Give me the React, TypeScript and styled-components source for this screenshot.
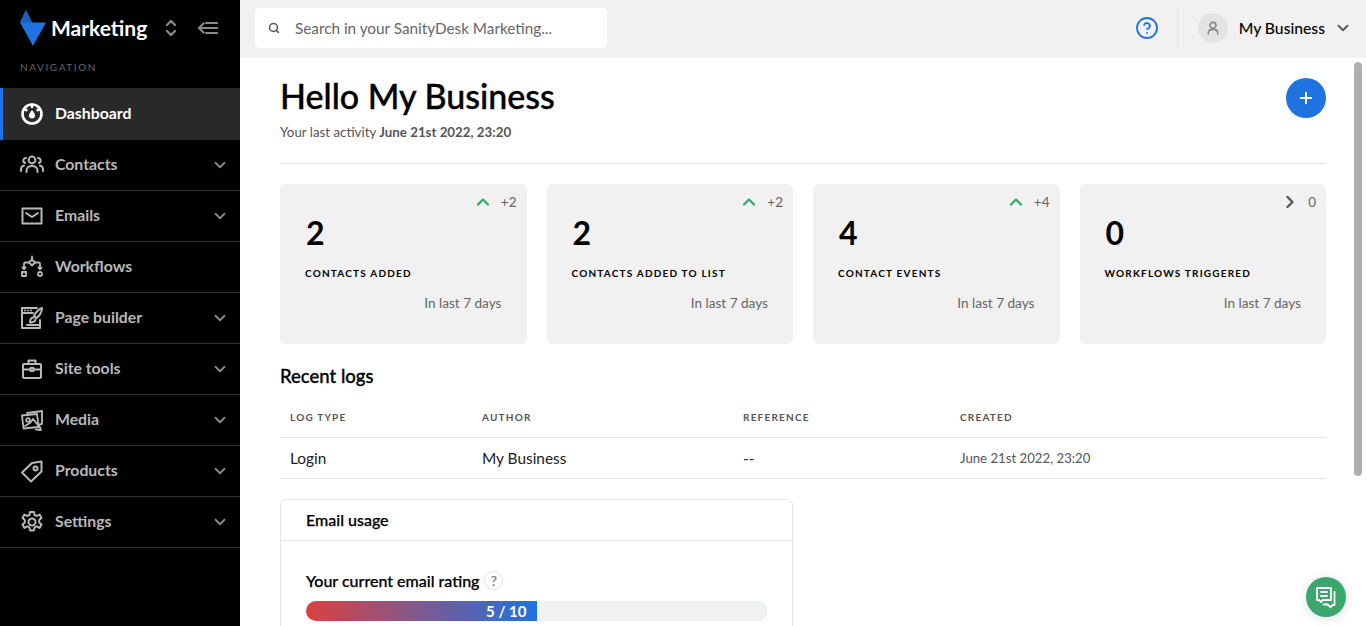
import React from "react";
import styled, { createGlobalStyle } from "styled-components";
import { ChevronDown, ChevronUp, ChevronRight, Search, Plus, CircleHelp } from "lucide-react";

const Font = `"Lato", "Noto Sans", "Liberation Sans", sans-serif`;

const Global = createGlobalStyle`
  html, body { margin: 0; padding: 0; height: 100%; overflow: hidden; background: #fff; }
  * { box-sizing: border-box; }
  body { font-family: ${Font}; color: #000; }
`;

const Shell = styled.div`
  display: flex;
  width: 100vw;
  height: 100vh;
  overflow: hidden;
  position: relative;
`;

const Sidebar = styled.aside`
  width: 240px;
  flex: none;
  background: #000;
  display: flex;
  flex-direction: column;
`;

const Brand = styled.div`
  height: 55px;
  display: flex;
  align-items: center;
  padding-left: 20px;
`;

const BrandName = styled.span`
  color: #fff;
  font-size: 21px;
  font-weight: 700;
  margin-left: 5px;
  width: 114px;
`;

const BrandIcon = styled.span`
  color: #8a8a8a;
  display: flex;
  margin-right: 21px;
`;

const NavTitle = styled.div`
  height: 33px;
  padding: 5px 0 0 20px;
  color: #666;
  font-size: 10px;
  letter-spacing: 1.6px;
  line-height: 14px;
`;

const NavRow = styled.div<{ $active?: boolean }>`
  height: ${(p) => (p.$active ? "52px" : "51px")};
  display: flex;
  align-items: center;
  padding-left: ${(p) => (p.$active ? "17px" : "20px")};
  padding-right: 11px;
  background: ${(p) => (p.$active ? "#292929" : "transparent")};
  border-left: ${(p) => (p.$active ? "3px solid #1f73e0" : "none")};
  border-bottom: ${(p) => (p.$active ? "none" : "1px solid #333")};
  color: ${(p) => (p.$active ? "#fff" : "#b8b8b8")};
`;

const NavIcon = styled.span`
  width: 35px;
  flex: none;
  display: flex;
`;

const NavLabel = styled.span`
  flex: 1;
  font-size: 15.8px;
  font-weight: 700;
  padding-bottom: 4px;
`;

const Main = styled.div`
  flex: 1;
  min-width: 0;
  display: flex;
  flex-direction: column;
`;

const Topbar = styled.header`
  height: 58px;
  flex: none;
  background: #f1f1f1;
  display: flex;
  align-items: center;
  padding: 0 14px 2px 15px;
`;

const SearchBox = styled.div`
  width: 352px;
  height: 40px;
  background: #fff;
  border-radius: 5px;
  display: flex;
  align-items: center;
  padding-left: 13px;
  gap: 15px;
  color: #666;
  font-size: 15.3px;
`;

const TopRight = styled.div`
  margin-left: auto;
  display: flex;
  align-items: center;
`;

const HelpBtn = styled.span`
  color: #1f73e0;
  display: flex;
  margin-right: 18px;
`;

const VSep = styled.span`
  width: 1px;
  height: 40px;
  background: #e4e4e4;
  margin-right: 20px;
`;

const Avatar = styled.span`
  width: 30px;
  height: 30px;
  border-radius: 50%;
  background: #e3e3e3;
  color: #8a8a8a;
  display: flex;
  align-items: center;
  justify-content: center;
  margin-right: 11px;
`;

const UserName = styled.span`
  font-size: 15.7px;
  font-weight: 500;
  margin-right: 9px;
`;

const Content = styled.main`
  flex: 1;
  min-height: 0;
  overflow: hidden;
  padding: 20px 40px 0;
`;

const Head = styled.div`
  display: flex;
  justify-content: space-between;
  align-items: flex-start;
  height: 86px;
  border-bottom: 1px solid #e4e4e4;
`;

const Title = styled.h1`
  margin: -1px 0 0;
  font-size: 34px;
  line-height: 38px;
  font-weight: 500;
  -webkit-text-stroke: 0.4px #000;
`;

const Sub = styled.p`
  margin: 8px 0 0;
  font-size: 13.3px;
  line-height: 18px;
  color: #555;
  & b { font-weight: 700; }
`;

const AddBtn = styled.span`
  width: 40px;
  height: 40px;
  border-radius: 50%;
  background: #1f73e0;
  color: #fff;
  display: flex;
  align-items: center;
  justify-content: center;
`;

const Stats = styled.div`
  display: grid;
  grid-template-columns: repeat(4, 1fr);
  gap: 20px;
  margin-top: 20px;
`;

const Stat = styled.div`
  height: 160px;
  background: #f1f1f1;
  border-radius: 6px;
  padding: 10px 10px 0 25px;
  display: flex;
  flex-direction: column;
`;

const Trend = styled.div<{ $up: boolean }>`
  display: flex;
  justify-content: flex-end;
  align-items: center;
  height: 16px;
  font-size: 13.5px;
  color: #666;
  gap: 8px;
  & svg { color: ${(p) => (p.$up ? "#3aa76d" : "#555")}; }
`;

const StatValue = styled.div`
  font-size: 32px;
  line-height: 38px;
  font-weight: 700;
  margin-top: 4px;
  padding-left: 1px;
`;

const StatLabel = styled.div`
  font-size: 10px;
  line-height: 14px;
  font-weight: 700;
  letter-spacing: 1.2px;
  margin-top: 14px;
`;

const StatNote = styled.div`
  font-size: 13.6px;
  line-height: 18px;
  color: #666;
  text-align: right;
  padding-right: 15px;
  margin-top: 14px;
`;

const SectionTitle = styled.h2`
  margin: 22px 0 0;
  font-size: 18.5px;
  line-height: 20px;
  font-weight: 500;
  -webkit-text-stroke: 0.3px #000;
`;

const LogTable = styled.div`
  margin-top: 11px;
`;

const LogRow = styled.div<{ $head?: boolean }>`
  display: grid;
  grid-template-columns: 192px 261px 217px 1fr;
  align-items: center;
  height: 41px;
  padding-left: 10px;
  border-bottom: 1px solid #e4e4e4;
  font-size: ${(p) => (p.$head ? "10px" : "15.4px")};
  letter-spacing: ${(p) => (p.$head ? "1.2px" : "0")};
  color: ${(p) => (p.$head ? "#555" : "#222")};
  font-weight: ${(p) => (p.$head ? 700 : 400)};
`;

const LogDate = styled.span`
  font-size: 13.2px;
  color: #555;
`;

const Usage = styled.section`
  width: 513px;
  margin-top: 20px;
  border: 1px solid #e4e4e4;
  border-radius: 6px;
`;

const UsageHead = styled.div`
  height: 41px;
  display: flex;
  align-items: center;
  padding: 0 0 2px 25px;
  border-bottom: 1px solid #e4e4e4;
  font-size: 16px;
  font-weight: 500;
  -webkit-text-stroke: 0.25px #000;
`;

const UsageBody = styled.div`
  padding: 30px 25px 30px;
`;

const RatingLabel = styled.div`
  display: flex;
  align-items: center;
  gap: 5px;
  font-size: 16px;
  font-weight: 500;
  height: 20px;
  padding-bottom: 2px;
  -webkit-text-stroke: 0.25px #000;
`;

const Hint = styled.span`
  width: 19px;
  height: 19px;
  border-radius: 50%;
  border: 1px solid #e4e4e4;
  color: #777;
  font-size: 14px;
  display: flex;
  align-items: center;
  justify-content: center;
  -webkit-text-stroke: 0;
`;

const Track = styled.div`
  margin-top: 10px;
  height: 20px;
  border-radius: 10px;
  background: #f1f1f1;
  overflow: hidden;
  box-shadow: inset -1px 0 0 #dcefe4;
`;

const Fill = styled.div`
  height: 100%;
  background: linear-gradient(90deg, #dc4040, #1f73e0);
  color: #fff;
  font-size: 15px;
  line-height: 20px;
  font-weight: 700;
  text-align: right;
  padding-right: 10px;
`;

const ScrollThumb = styled.div`
  position: absolute;
  left: 1354px;
  top: 62px;
  width: 8px;
  height: 414px;
  background: #b0b0b0;
  border-radius: 4px;
`;

const ChatBtn = styled.span`
  position: absolute;
  left: 1306px;
  top: 577px;
  width: 40px;
  height: 40px;
  border-radius: 50%;
  background: #3aa76d;
  color: #fff;
  display: flex;
  align-items: center;
  justify-content: center;
  box-shadow: 0 2px 12px rgba(0, 0, 0, 0.12);
`;

const Ico = ({ children, size = 24, sw = 1.8 }: { children: React.ReactNode; size?: number; sw?: number }) => (
  <svg width={size} height={size} viewBox="0 0 24 24" fill="none" stroke="currentColor" strokeWidth={sw} strokeLinecap="round" strokeLinejoin="round">
    {children}
  </svg>
);

const Logo = () => (
  <svg width="26" height="36" viewBox="0 0 26 36">
    <polygon points="6,0 0,12.5 13,36 26,12.5 12,12.5" fill="#1f73e0" />
    <polygon points="6,0 0,12.5 12,12.5" fill="#1a5fb8" />
  </svg>
);

const SwitchIcon = () => (
  <svg width="12" height="18" viewBox="0 0 12 18" fill="none" stroke="currentColor" strokeWidth="2.2" strokeLinecap="round" strokeLinejoin="round">
    <path d="M2 6l4-4 4 4" />
    <path d="M2 12l4 4 4-4" />
  </svg>
);

const CollapseIcon = () => (
  <svg width="20" height="14" viewBox="0 0 20 14" fill="none" stroke="currentColor" strokeWidth="2.2" strokeLinecap="round" strokeLinejoin="round">
    <path d="M5.500 2.500L1 7l4.500 4.500" />
    <path d="M8 2h11M3 7h16M8 12h11" />
  </svg>
);

const DashIcon = () => (
  <Ico sw={2.6}>
    <circle cx="12" cy="12" r="9.500" />
    <path d="M12 8c-2 2.600-3 3.800-3 5.400a3 3 0 0 0 6 0c0-1.600-1-2.800-3-5.400z" fill="currentColor" stroke="none" />
    <path d="M12 2.500v2.500M4.500 7l2 1.200M19.500 7l-2 1.200" />
  </Ico>
);
const ContactsIcon = () => (
  <Ico sw={2}>
    <circle cx="12" cy="7" r="3.400" />
    <path d="M6.500 19v-1.500c0-2.600 2.400-4.500 5.500-4.500s5.500 1.900 5.500 4.500V19" />
    <path d="M6 5a2.600 2.600 0 0 0-1 5M1 18v-1.500c0-2 1-3.400 3-4" />
    <path d="M18 5a2.600 2.600 0 0 1 1 5M23 18v-1.500c0-2-1-3.400-3-4" />
  </Ico>
);
const MailIcon = () => (
  <Ico sw={2}>
    <rect x="2.500" y="4.500" width="19" height="15" />
    <path d="M6 9l6 4 6-4" />
  </Ico>
);
const FlowIcon = () => (
  <Ico sw={1.8}>
    <path d="M12 1.500v3" />
    <path d="M12 4.500l3 3-3 3-3-3z" />
    <path d="M9 7.500H5.500A1.500 1.500 0 0 0 4 9v5M15 7.500h3.500A1.500 1.500 0 0 1 20 9v5" />
    <path d="M2.500 12.500L4 14l1.500-1.500M18.500 12.500L20 14l1.500-1.500" />
    <rect x="2" y="17" width="4" height="4" />
    <circle cx="20" cy="19" r="2" />
  </Ico>
);
const PageIcon = () => (
  <Ico sw={2}>
    <path d="M20 14v8H2V2h15" />
    <path d="M2 7h11" />
    <path d="M5 4.500h.01M8 4.500h.01M11 4.500h.01" />
    <path d="M22 2c-3 1-7 5-8 8l2 2c3-1 6-6 6-10z" />
    <path d="M13.500 11.500c-2 0-3.500 1.500-3.500 5 2 0 5-1 5.500-3" />
    <path d="M7 19h13" />
  </Ico>
);
const ToolsIcon = () => (
  <Ico sw={2}>
    <rect x="3" y="7" width="18" height="14" rx="1" />
    <path d="M8.500 7V3.500h7V7M3 12.500h18" />
    <rect x="10.500" y="11" width="3" height="3" fill="#000" />
  </Ico>
);
const MediaIcon = () => (
  <Ico sw={1.8}>
    <path d="M7 5l15-2 0 13-3 .5" />
    <path d="M2 7.500l15-1.500 1.500 13-15 1.500z" />
    <circle cx="8" cy="12" r="1.800" />
    <path d="M5 18l5-3 3-4 5 6" />
    <path d="M19 17l2 5-5-.5" />
  </Ico>
);
const TagIcon = () => (
  <Ico sw={2}>
    <path d="M21.500 2.500v10L11 22.500l-9-9L12 4z" />
    <circle cx="15.500" cy="9.500" r="2" />
  </Ico>
);
const GearIcon = () => (
  <Ico sw={2}>
    <circle cx="12" cy="12" r="3.500" />
    <path d="M10 2h4l.6 3 2.200 1 2.700-1.500 2 3.500-2.300 2v2.400l2.300 2-2 3.500-2.700-1.500-2.200 1-.6 3h-4l-.6-3-2.200-1-2.700 1.500-2-3.500 2.300-2v-2.400l-2.300-2 2-3.500 2.700 1.500 2.200-1z" />
  </Ico>
);
const UserIcon = () => (
  <Ico size={16} sw={2.4}>
    <circle cx="12" cy="8" r="4.500" />
    <path d="M5 21v-2c0-3 2-5 7-5s7 2 7 5v2" />
  </Ico>
);
const ChatIcon = () => (
  <Ico size={24} sw={1.8}>
    <path d="M3 3h14v12H9l-2 2-2-2H3z" />
    <path d="M7 7h6M7 11h6" />
    <path d="M20.500 7v13h-2l-2 2-3-2.500h-4" />
  </Ico>
);

const nav = [
  { label: "Contacts", icon: <ContactsIcon />, more: true },
  { label: "Emails", icon: <MailIcon />, more: true },
  { label: "Workflows", icon: <FlowIcon />, more: false },
  { label: "Page builder", icon: <PageIcon />, more: true },
  { label: "Site tools", icon: <ToolsIcon />, more: true },
  { label: "Media", icon: <MediaIcon />, more: true },
  { label: "Products", icon: <TagIcon />, more: true },
  { label: "Settings", icon: <GearIcon />, more: true },
];

const stats = [
  { value: "2", label: "CONTACTS ADDED", delta: "+2", up: true },
  { value: "2", label: "CONTACTS ADDED TO LIST", delta: "+2", up: true },
  { value: "4", label: "CONTACT EVENTS", delta: "+4", up: true },
  { value: "0", label: "WORKFLOWS TRIGGERED", delta: "0", up: false },
];

export default function App() {
  return (
    <Shell>
      <Global />
      <Sidebar>
        <Brand>
          <Logo />
          <BrandName>Marketing</BrandName>
          <BrandIcon><SwitchIcon /></BrandIcon>
          <BrandIcon><CollapseIcon /></BrandIcon>
        </Brand>
        <NavTitle>NAVIGATION</NavTitle>
        <NavRow $active>
          <NavIcon><DashIcon /></NavIcon>
          <NavLabel>Dashboard</NavLabel>
        </NavRow>
        {nav.map((n) => (
          <NavRow key={n.label}>
            <NavIcon>{n.icon}</NavIcon>
            <NavLabel>{n.label}</NavLabel>
            {n.more && <ChevronDown size={18} strokeWidth={2.4} color="#8a8a8a" />}
          </NavRow>
        ))}
      </Sidebar>
      <Main>
        <Topbar>
          <SearchBox>
            <Search size={12} strokeWidth={3} color="#555" />
            Search in your SanityDesk Marketing...
          </SearchBox>
          <TopRight>
            <HelpBtn><CircleHelp size={24} strokeWidth={1.8} /></HelpBtn>
            <VSep />
            <Avatar><UserIcon /></Avatar>
            <UserName>My Business</UserName>
            <ChevronDown size={18} strokeWidth={2.4} color="#555" />
          </TopRight>
        </Topbar>
        <Content>
          <Head>
            <div>
              <Title>Hello My Business</Title>
              <Sub>Your last activity <b>June 21st 2022, 23:20</b></Sub>
            </div>
            <AddBtn><Plus size={18} strokeWidth={2.6} /></AddBtn>
          </Head>
          <Stats>
            {stats.map((s) => (
              <Stat key={s.label}>
                <Trend $up={s.up}>
                  {s.up ? <ChevronUp size={20} strokeWidth={2.8} /> : <ChevronRight size={20} strokeWidth={2.8} />}
                  <span>{s.delta}</span>
                </Trend>
                <StatValue>{s.value}</StatValue>
                <StatLabel>{s.label}</StatLabel>
                <StatNote>In last 7 days</StatNote>
              </Stat>
            ))}
          </Stats>
          <SectionTitle>Recent logs</SectionTitle>
          <LogTable>
            <LogRow $head>
              <span>LOG TYPE</span>
              <span>AUTHOR</span>
              <span>REFERENCE</span>
              <span>CREATED</span>
            </LogRow>
            <LogRow>
              <span>Login</span>
              <span>My Business</span>
              <span>--</span>
              <LogDate>June 21st 2022, 23:20</LogDate>
            </LogRow>
          </LogTable>
          <Usage>
            <UsageHead>Email usage</UsageHead>
            <UsageBody>
              <RatingLabel>Your current email rating <Hint>?</Hint></RatingLabel>
              <Track><Fill style={{ width: "50%" }}>5 / 10</Fill></Track>
            </UsageBody>
          </Usage>
        </Content>
      </Main>
      <ScrollThumb />
      <ChatBtn><ChatIcon /></ChatBtn>
    </Shell>
  );
}
